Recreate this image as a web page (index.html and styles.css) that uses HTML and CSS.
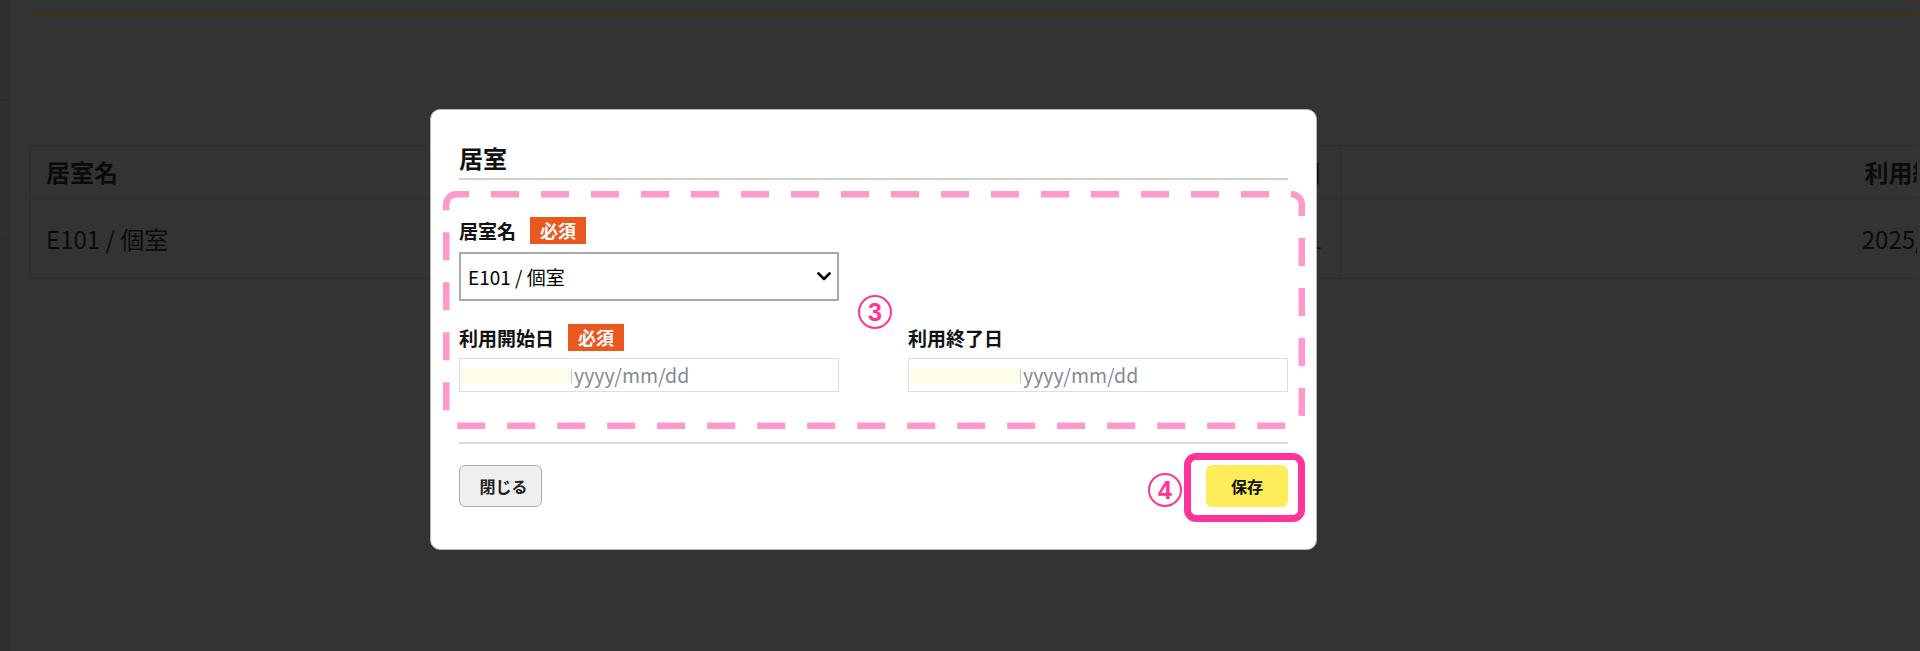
FILE: index.html
```html
<!DOCTYPE html>
<html lang="ja">
<head>
<meta charset="utf-8">
<title>居室</title>
<link rel="stylesheet" href="styles.css">
</head>
<body>
<div class="page">
  <aside class="side">
    <span class="side-rule"></span>
    <span class="side-rule"></span>
  </aside>
  <main class="main">
    <div class="accent-bar"></div>
    <div class="table-wrap">
      <table class="rooms">
        <colgroup>
          <col class="w-name">
          <col class="w-start">
          <col class="w-end">
        </colgroup>
        <thead>
          <tr><th class="c-name">居室名</th><th class="c-start">利用開始日</th><th class="c-end">利用終了日</th></tr>
        </thead>
        <tbody>
          <tr><td class="c-name">E101 / 個室</td><td class="c-start">2025/04/01</td><td class="c-end">2025/04/01</td></tr>
        </tbody>
      </table>
    </div>
  </main>
</div>

<section class="modal">
  <h2 class="modal-title">居室</h2>
  <div class="modal-body">
    <div class="field field-room">
      <div class="field-label"><span>居室名</span><span class="badge">必須</span></div>
      <div class="select">
        <span>E101 / 個室</span>
        <svg class="chev" width="14" height="9" viewBox="0 0 14 9"><path d="M1.5 1.5 L7 7 L12.5 1.5" fill="none" stroke="#000" stroke-width="2.6" stroke-linecap="round" stroke-linejoin="round"/></svg>
      </div>
    </div>
    <div class="field field-start">
      <div class="field-label"><span>利用開始日</span><span class="badge">必須</span></div>
      <div class="date"><span class="fill"></span><span class="cursor"></span><span class="ph">yyyy/mm/dd</span></div>
    </div>
    <div class="field field-end">
      <div class="field-label"><span>利用終了日</span></div>
      <div class="date"><span class="fill"></span><span class="cursor"></span><span class="ph">yyyy/mm/dd</span></div>
    </div>
  </div>
  <div class="modal-foot">
    <button class="btn btn-close" type="button">閉じる</button>
    <button class="btn btn-save" type="button">保存</button>
  </div>

  <svg class="anno-dash" width="862" height="238" viewBox="0 0 862 238"><rect x="3.25" y="3.25" width="855.5" height="231.5" rx="10" ry="10" fill="none" stroke="#ff99cc" stroke-width="6.5" stroke-dasharray="28 22" stroke-dashoffset="15.25"/></svg>
  <span class="marker marker-3">3</span>
  <span class="marker marker-4">4</span>
  <span class="anno-box"></span>
</section>
</body>
</html>
```

FILE: styles.css
```css
html, body {
  margin: 0;
  padding: 0;
}
body {
  width: 1920px;
  height: 651px;
  overflow: hidden;
  background: #333333;
  font-family: "Noto Sans CJK JP", "Noto Sans", sans-serif;
}

.page {
  display: flex;
  height: 651px;
}
.side {
  width: 8px;
  background: #303030;
  border-right: 1px solid #2b2b2b;
  display: flex;
  flex-direction: column;
  padding-top: 100px;
  gap: 136px;
}
.side-rule {
  display: block;
  height: 1px;
  background: #2a2a2a;
}
.main {
  flex: 1;
  min-width: 0;
  padding: 12px 3px 0 20px;
}
.accent-bar {
  height: 5px;
  background: #3a3317;
}
.table-wrap {
  margin-top: 128px;
  overflow: hidden;
}
.rooms {
  border-collapse: collapse;
  table-layout: fixed;
  width: 2481px;
  color: #0b0b0b;
  font-size: 24px;
}
.w-name { width: 650px; }
.w-start { width: 661px; }
.w-end { width: 1170px; }
.rooms th,
.rooms td {
  border: 1px solid #2d2d2d;
  padding: 0 18px 0 16px;
  white-space: nowrap;
}
.rooms th {
  height: 51px;
  font-weight: 700;
  text-align: left;
}
.rooms td {
  height: 80px;
  font-weight: 400;
}
.rooms .c-start { text-align: right; }
.rooms .c-end { text-align: center; }

/* modal */
.modal {
  position: absolute;
  left: 430px;
  top: 109px;
  width: 887px;
  box-sizing: border-box;
  background: #ffffff;
  border: 1px solid #b4b4b4;
  border-radius: 10px;
  padding: 33px 28px 42px;
  color: #111;
}
.modal-title {
  margin: 0;
  font-size: 24px;
  line-height: 30px;
  font-weight: 700;
  padding-bottom: 5px;
  border-bottom: 2px solid #cfcfcf;
}
.modal-body {
  display: grid;
  grid-template-columns: 380px 380px;
  justify-content: space-between;
  row-gap: 23px;
  padding: 37px 0 50px;
  border-bottom: 2px solid #dadada;
}
.field {
  display: flex;
  flex-direction: column;
  gap: 7px;
}
.field-room { grid-column: 1; grid-row: 1; gap: 8px; }
.field-start { grid-column: 1; grid-row: 2; }
.field-end { grid-column: 2; grid-row: 2; }

.field-label {
  display: flex;
  align-items: center;
  gap: 14px;
  height: 27px;
  font-size: 19px;
  font-weight: 700;
  line-height: 27px;
}
.badge {
  background: #e8581f;
  color: #fff;
  font-size: 18px;
  font-weight: 700;
  line-height: 27px;
  padding: 0 10px;
}
.select {
  height: 49px;
  box-sizing: border-box;
  border: 2px solid #a9a9a9;
  display: flex;
  align-items: center;
  justify-content: space-between;
  padding: 0 6px 0 7px;
  font-size: 19px;
  color: #000;
}
.chev {
  display: block;
}
.date {
  height: 34px;
  box-sizing: border-box;
  border: 1px solid #dedede;
  display: flex;
  align-items: center;
  padding-left: 1px;
}
.date .fill {
  width: 110px;
  height: 14px;
  margin-top: 2px;
  background: #fcfce9;
}
.date .cursor {
  width: 1px;
  height: 14px;
  margin-top: 2px;
  background: #c8c8c8;
}
.date .ph {
  margin-left: 2px;
  font-size: 19.5px;
  line-height: 32px;
  color: #838a93;
}

.modal-foot {
  display: flex;
  justify-content: space-between;
  padding-top: 21px;
}
.btn {
  height: 42px;
  box-sizing: border-box;
  border-radius: 6px;
  font-family: "Noto Sans CJK JP", "Noto Sans", sans-serif;
  font-size: 16px;
  font-weight: 700;
  color: #111;
  padding: 0;
}
.btn-close {
  width: 83px;
  background: #efefef;
  border: 1px solid #adadad;
  padding-left: 6px;
  color: #222;
}
.btn-save {
  width: 82px;
  background: #ffec5a;
  border: none;
}

/* annotations */
.anno-dash {
  position: absolute;
  left: 12px;
  top: 81px;
  pointer-events: none;
}
.marker {
  position: absolute;
  width: 34px;
  height: 34px;
  box-sizing: border-box;
  border: 2px solid #ff3399;
  border-radius: 50%;
  color: #ff3399;
  font-family: "Liberation Sans", "Noto Sans", sans-serif;
  font-size: 25px;
  font-weight: 700;
  line-height: 30px;
  text-align: center;
}
.marker-3 { left: 427px; top: 185px; }
.marker-4 { left: 717px; top: 363px; }
.anno-box {
  position: absolute;
  left: 753px;
  top: 343px;
  width: 121px;
  height: 69px;
  box-sizing: border-box;
  border: 7px solid #ff3399;
  border-radius: 12px;
}
```
